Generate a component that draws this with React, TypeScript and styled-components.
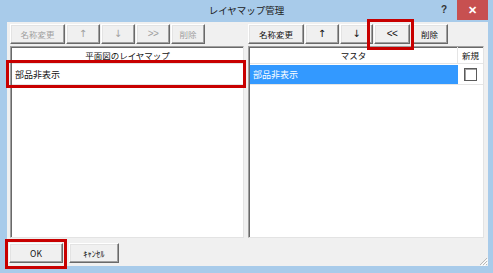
import React from "react";
import styled, { createGlobalStyle } from "styled-components";

const GlobalStyle = createGlobalStyle`
  html, body {
    margin: 0;
    padding: 0;
    background: #a8cbea;
  }
  body {
    font-family: "Noto Sans CJK JP", "Liberation Sans", sans-serif;
  }
`;

const Window = styled.div`
  position: relative;
  width: 493px;
  height: 273px;
  background: #a8cbea;
  display: flex;
  flex-direction: column;
  overflow: hidden;
`;

const TitleBar = styled.div`
  height: 22px;
  display: flex;
  align-items: center;
  justify-content: center;
  position: relative;
  font-size: 9.5px;
  line-height: 1;
  color: #1a1a1a;
`;

const HelpMark = styled.span`
  position: absolute;
  left: 441px;
  top: 5px;
  font-family: "Liberation Sans", sans-serif;
  font-weight: bold;
  font-size: 10px;
  color: #333;
`;

const CloseButton = styled.div`
  position: absolute;
  left: 457px;
  top: 0;
  width: 31px;
  height: 20px;
  background: #c75050;
  color: #fff;
  display: flex;
  align-items: center;
  justify-content: center;
  font-family: "Liberation Sans", sans-serif;
  font-weight: bold;
  font-size: 11px;
`;

const Client = styled.div`
  margin: 0 5px 0 7px;
  height: 244px;
  background: #f0f0f0;
  display: flex;
  flex-direction: column;
`;

const Panes = styled.div`
  display: grid;
  grid-template-columns: 234px 236px;
  column-gap: 4px;
  padding: 2px 0 0 3px;
  height: 216px;
  box-sizing: border-box;
`;

const Pane = styled.div`
  display: flex;
  flex-direction: column;
  gap: 2px;
  min-height: 0;
`;

const Toolbar = styled.div`
  display: flex;
  gap: 1px;
  height: 20px;
`;

const Button = styled.div<{ $w: number; $disabled?: boolean }>`
  width: ${(p) => p.$w}px;
  height: 20px;
  box-sizing: border-box;
  background: #f0f0f0;
  border-top: 1px solid #ffffff;
  border-left: 1px solid #ffffff;
  border-right: 1px solid #696969;
  border-bottom: 1px solid #696969;
  box-shadow: inset -1px -1px 0 #a0a0a0, inset 1px 1px 0 #e3e3e3;
  display: flex;
  align-items: center;
  justify-content: center;
  font-size: 8.5px;
  line-height: 1;
  color: ${(p) => (p.$disabled ? "#a0a0a0" : "#111")};
  flex-shrink: 0;
`;

const Arrow = styled.span`
  font-family: "DejaVu Sans", sans-serif;
  font-size: 10px;
`;

const Chevrons = styled.span`
  font-family: "Liberation Sans", sans-serif;
  font-size: 10px;
  letter-spacing: -0.5px;
`;

const ListBox = styled.div`
  flex: 1;
  background: #fff;
  border-top: 1px solid #a0a0a0;
  border-left: 1px solid #a0a0a0;
  border-right: 1px solid #e3e3e3;
  border-bottom: 1px solid #e3e3e3;
  box-shadow: inset 1px 1px 0 #696969;
  display: flex;
  flex-direction: column;
`;

const Header = styled.div`
  display: flex;
  height: 16px;
  border-bottom: 1px solid #e5e5e5;
  margin-left: 1px;
`;

const HeaderCell = styled.div<{ $w?: number }>`
  ${(p) => (p.$w ? `width: ${p.$w}px;` : "flex: 1;")}
  display: flex;
  align-items: center;
  justify-content: center;
  font-size: 8.5px;
  line-height: 1;
  color: #111;
  border-right: 1px solid #e5e5e5;
  &:last-child {
    border-right: none;
  }
`;

const Row = styled.div`
  display: flex;
  height: 19px;
  margin: 1px 0 0 1px;
  border-bottom: 1px solid #e5e5e5;
`;

const Cell = styled.div<{ $selected?: boolean }>`
  flex: 1;
  display: flex;
  align-items: center;
  padding-left: 3px;
  font-size: 9px;
  line-height: 1;
  background: ${(p) => (p.$selected ? "#3399ff" : "transparent")};
  color: ${(p) => (p.$selected ? "#fff" : "#111")};
`;

const CheckCell = styled.div`
  width: 25px;
  display: flex;
  align-items: center;
  justify-content: center;
`;

const CheckBox = styled.div`
  width: 11px;
  height: 11px;
  background: #fff;
  border: 1px solid #5a5a5a;
  box-shadow: inset 1px 1px 0 #a0a0a0;
`;

const Footer = styled.div`
  flex: 1;
  display: flex;
  align-items: flex-start;
  gap: 6px;
  padding: 5px 0 0 2px;
`;

const Grip = styled.svg`
  margin-left: auto;
  align-self: flex-end;
`;

const Mark = styled.div<{ $x: number; $y: number; $w: number; $h: number }>`
  position: absolute;
  left: ${(p) => p.$x}px;
  top: ${(p) => p.$y}px;
  width: ${(p) => p.$w}px;
  height: ${(p) => p.$h}px;
  box-sizing: border-box;
  border: 3px solid #c80000;
  pointer-events: none;
`;

export default function App() {
  return (
    <>
      <GlobalStyle />
      <Window>
        <TitleBar>
          レイヤマップ管理
          <HelpMark>?</HelpMark>
          <CloseButton>✕</CloseButton>
        </TitleBar>
        <Client>
          <Panes>
            <Pane>
              <Toolbar>
                <Button $w={55} $disabled>名称変更</Button>
                <Button $w={34} $disabled><Arrow>{"\u2191"}</Arrow></Button>
                <Button $w={34} $disabled><Arrow>{"\u2193"}</Arrow></Button>
                <Button $w={34} $disabled><Chevrons>&gt;&gt;</Chevrons></Button>
                <Button $w={34} $disabled>削除</Button>
              </Toolbar>
              <ListBox>
                <Header>
                  <HeaderCell>平面図のレイヤマップ</HeaderCell>
                </Header>
                <Row>
                  <Cell>部品非表示</Cell>
                </Row>
              </ListBox>
            </Pane>
            <Pane>
              <Toolbar>
                <Button $w={56}>名称変更</Button>
                <Button $w={34}><Arrow>{"\u2191"}</Arrow></Button>
                <Button $w={33}><Arrow>{"\u2193"}</Arrow></Button>
                <Button $w={36}><Chevrons>&lt;&lt;</Chevrons></Button>
                <Button $w={37}>削除</Button>
              </Toolbar>
              <ListBox>
                <Header>
                  <HeaderCell>マスタ</HeaderCell>
                  <HeaderCell $w={25}>新規</HeaderCell>
                </Header>
                <Row>
                  <Cell $selected>部品非表示</Cell>
                  <CheckCell>
                    <CheckBox />
                  </CheckCell>
                </Row>
              </ListBox>
            </Pane>
          </Panes>
          <Footer>
            <Button $w={54}>OK</Button>
            <Button $w={50}>ｷｬﾝｾﾙ</Button>
            <Grip width="10" height="10" viewBox="0 0 10 10">
              <path d="M9 2 L2 9 M9 5 L5 9 M9 8 L8 9" stroke="#b8b8b8" strokeWidth="1" />
              <path d="M10 3 L3 10 M10 6 L6 10" stroke="#ffffff" strokeWidth="1" />
            </Grip>
          </Footer>
        </Client>
        <Mark $x={6} $y={60} $w={240} $h={28} />
        <Mark $x={367} $y={19} $w={47} $h={31} />
        <Mark $x={5} $y={239} $w={62} $h={30} />
      </Window>
    </>
  );
}
